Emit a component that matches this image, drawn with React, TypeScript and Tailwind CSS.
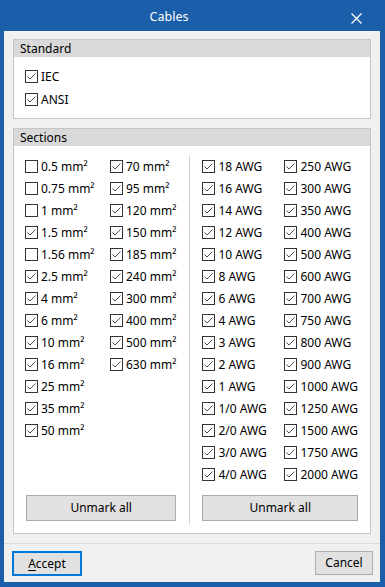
import { useState } from 'react'

const sectionsA = ['0.5', '0.75', '1', '1.5', '1.56', '2.5', '4', '6', '10', '16', '25', '35', '50']
const sectionsB = ['70', '95', '120', '150', '185', '240', '300', '400', '500', '630']
const awgA = ['18', '16', '14', '12', '10', '8', '6', '4', '3', '2', '1', '1/0', '2/0', '3/0', '4/0']
const awgB = ['250', '300', '350', '400', '500', '600', '700', '750', '800', '900', '1000', '1250', '1500', '1750', '2000']

const unchecked = ['0.5', '0.75', '1', '1.56']

const Check = ({ label, checked, onToggle, h = 'h-[22px]' }: { label: string; checked: boolean; onToggle: () => void; h?: string }) => (
  <label className={`flex items-center gap-[3px] ${h} cursor-default select-none whitespace-nowrap`} onClick={onToggle}>
    <span className="w-[13px] h-[13px] border border-[#333333] bg-white flex items-center justify-center shrink-0">
      {checked && (
        <svg width="11" height="11" viewBox="0 0 11 11">
          <path d="M1.5 5.5 L4 8 L9.5 2.5" fill="none" stroke="#4d4d4d" strokeWidth="1" />
        </svg>
      )}
    </span>
    <span className="leading-none pt-px">{label}</span>
  </label>
)

const GroupHeader = ({ title }: { title: string }) => (
  <div className="h-[17px] bg-[#d9d9d9] flex items-center pl-[6px] leading-none">{title}</div>
)

const UnmarkButton = ({ onClick }: { onClick: () => void }) => (
  <button
    className="h-[26px] w-full bg-[#e1e1e1] border border-[#adadad] flex items-center justify-center leading-none"
    onClick={onClick}
  >
    Unmark all
  </button>
)

const App = (): JSX.Element => {
  const [standard, setStandard] = useState({ IEC: true, ANSI: true })
  const [marked, setMarked] = useState<Record<string, boolean>>(() => {
    const m: Record<string, boolean> = {}
    ;[...sectionsA, ...sectionsB].forEach((s) => (m['mm' + s] = !unchecked.includes(s)))
    ;[...awgA, ...awgB].forEach((s) => (m['awg' + s] = true))
    return m
  })

  const toggle = (key: string) => setMarked((prev) => ({ ...prev, [key]: !prev[key] }))
  const unmark = (prefix: string) =>
    setMarked((prev) => {
      const next = { ...prev }
      Object.keys(next).forEach((k) => {
        if (k.startsWith(prefix)) next[k] = false
      })
      return next
    })

  return (
    <div
      className="w-[385px] h-[587px] bg-[#1b5ea9] flex flex-col text-[12px] text-black"
      style={{ fontFamily: '"Noto Sans", "Open Sans", sans-serif' }}
    >
      {/* title bar */}
      <div className="h-[31px] shrink-0 flex items-center relative text-white">
        <div className="w-[338px] text-center text-[12.5px] leading-none pt-[4px]">Cables</div>
        <svg className="absolute left-[351px] top-[13px]" width="11" height="11" viewBox="0 0 11 11">
          <path d="M0.5 0.5 L10.5 10.5 M10.5 0.5 L0.5 10.5" stroke="white" strokeWidth="1.3" />
        </svg>
      </div>

      <div className="flex-1 mx-[4px] mr-[5px] mb-[5px] bg-[#f0f0f0] flex flex-col">
        <div className="px-[9px] pt-[8px] flex flex-col gap-[9px]">
          {/* Standard */}
          <div className="border border-[#c6c6c6] bg-white h-[80px]">
            <GroupHeader title="Standard" />
            <div className="pl-[11px] pt-[8px] flex flex-col">
              <Check label="IEC" h="h-[23px]" checked={standard.IEC} onToggle={() => setStandard((s) => ({ ...s, IEC: !s.IEC }))} />
              <Check label="ANSI" h="h-[23px]" checked={standard.ANSI} onToggle={() => setStandard((s) => ({ ...s, ANSI: !s.ANSI }))} />
            </div>
          </div>

          {/* Sections */}
          <div className="border border-[#c6c6c6] bg-white h-[406px] flex flex-col">
            <GroupHeader title="Sections" />
            <div className="flex-1 flex pt-[9px] pb-[8px]">
              <div className="w-[176px] pl-[11px] pr-[13px] pb-[4px] flex flex-col">
                <div className="flex">
                  <div className="w-[85px] flex flex-col">
                    {sectionsA.map((s) => (
                      <Check key={s} label={`${s} mm²`} checked={marked['mm' + s]} onToggle={() => toggle('mm' + s)} />
                    ))}
                  </div>
                  <div className="flex flex-col">
                    {sectionsB.map((s) => (
                      <Check key={s} label={`${s} mm²`} checked={marked['mm' + s]} onToggle={() => toggle('mm' + s)} />
                    ))}
                  </div>
                </div>
                <div className="mt-auto pl-px">
                  <UnmarkButton onClick={() => unmark('mm')} />
                </div>
              </div>
              <div className="w-px bg-[#d0d0d0]" />
              <div className="flex-1 pl-[13px] pr-[12px] pb-[4px] flex flex-col">
                <div className="flex">
                  <div className="w-[82px] flex flex-col">
                    {awgA.map((s) => (
                      <Check key={s} label={`${s} AWG`} checked={marked['awg' + s]} onToggle={() => toggle('awg' + s)} />
                    ))}
                  </div>
                  <div className="flex flex-col">
                    {awgB.map((s) => (
                      <Check key={s} label={`${s} AWG`} checked={marked['awg' + s]} onToggle={() => toggle('awg' + s)} />
                    ))}
                  </div>
                </div>
                <div className="mt-auto">
                  <UnmarkButton onClick={() => unmark('awg')} />
                </div>
              </div>
            </div>
          </div>
        </div>

        {/* footer */}
        <div className="mt-[9px] border-t border-[#dcdcdc] flex-1 flex items-start justify-between pl-[8px] pr-[7px] pt-[7px]">
          <button className="w-[70px] h-[25px] bg-[#e1e1e1] border-2 border-[#0078d7] flex items-center justify-center leading-none">
            <span>
              <span className="underline underline-offset-2">A</span>ccept
            </span>
          </button>
          <button className="w-[58px] h-[24px] bg-[#e1e1e1] border border-[#adadad] flex items-center justify-center leading-none">
            Cancel
          </button>
        </div>
      </div>
    </div>
  )
}

export default App
